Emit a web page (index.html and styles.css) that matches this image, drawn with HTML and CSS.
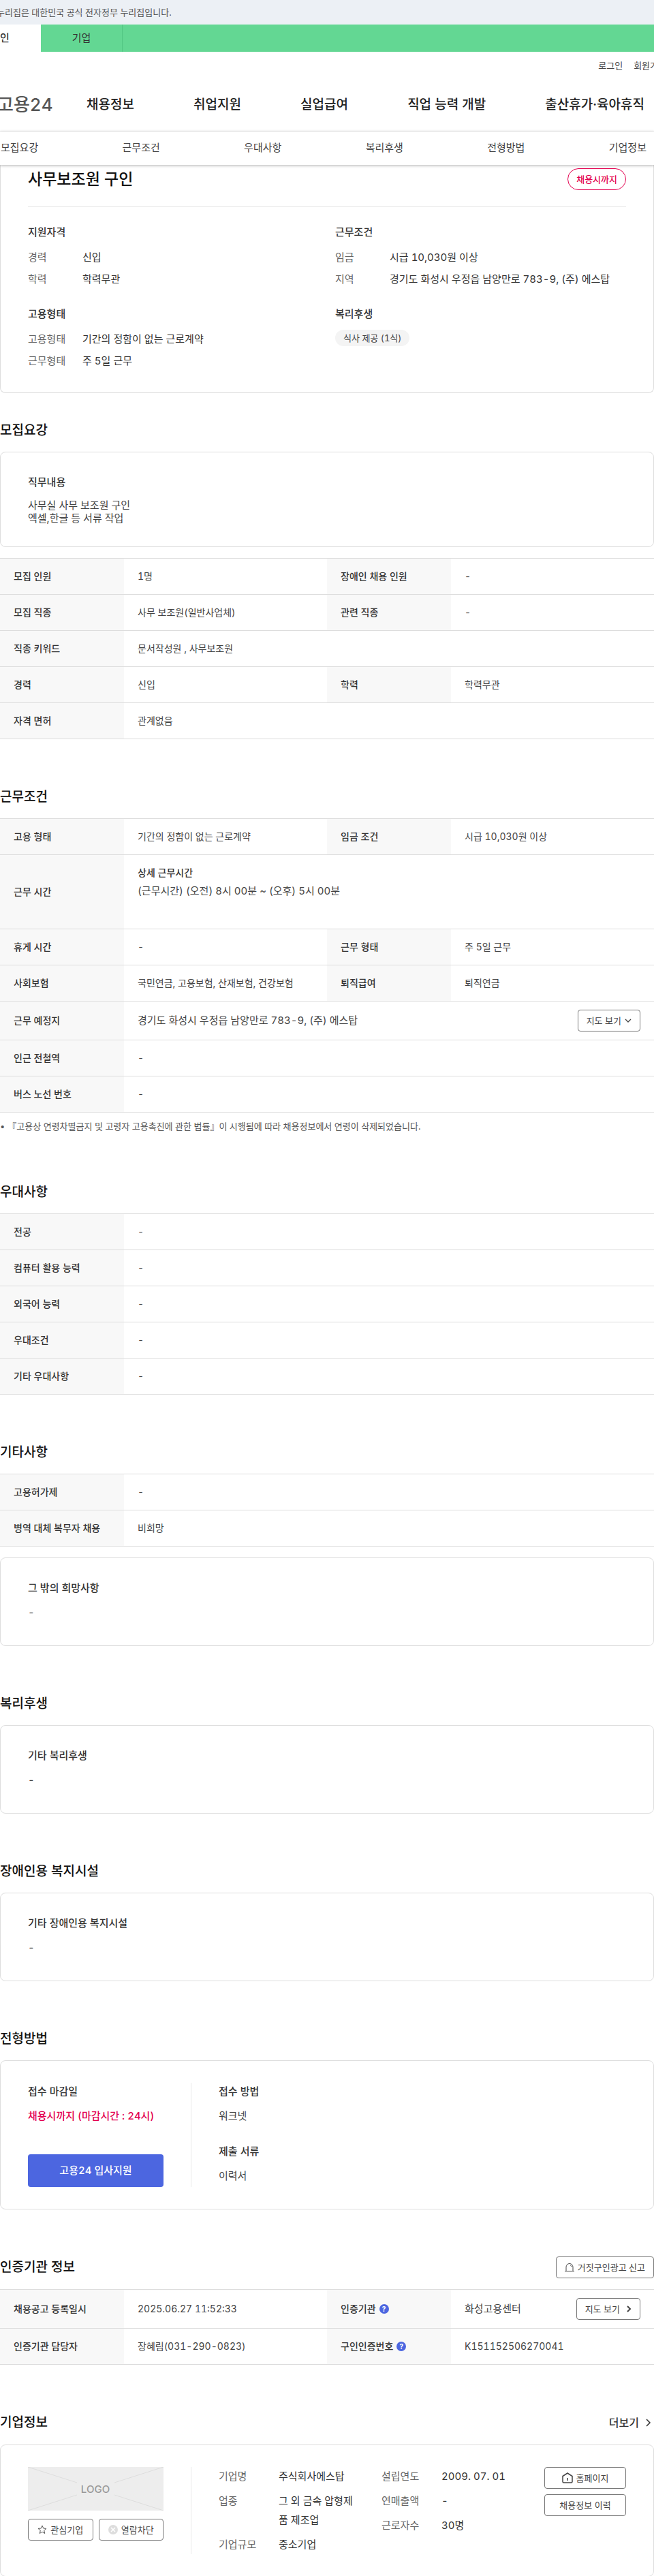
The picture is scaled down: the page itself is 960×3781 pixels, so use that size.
FILE: index.html
```
<!DOCTYPE html>
<html lang="ko">
<head>
<meta charset="utf-8">
<meta name="viewport" content="width=device-width, initial-scale=1">
<title>사무보조원 구인 - 고용24</title>
<link rel="stylesheet" href="styles.css">
</head>
<body>
<div class="gov-bar"><p class="gov-text">누리집은 대한민국 공식 전자정부 누리집입니다.</p></div>
<nav class="site-tabs" aria-label="사이트 구분">
  <a class="site-tab is-active" href="#">개인</a>
  <a class="site-tab" href="#">기업</a>
</nav>
<header class="header">
  <div class="util"><a href="#">로그인</a><a href="#">회원가입</a></div>
  <div class="gnb">
    <a class="brand" href="#">고용24</a>
    <nav class="gnb-menu" aria-label="주 메뉴">
      <a href="#">채용정보</a><a href="#">취업지원</a><a href="#">실업급여</a><a href="#">직업 능력 개발</a><a href="#">출산휴가·육아휴직</a>
    </nav>
  </div>
</header>
<nav class="section-nav" aria-label="본문 바로가기">
  <a href="#recruit">모집요강</a><a href="#work">근무조건</a><a href="#prefer">우대사항</a><a href="#welfare">복리후생</a><a href="#method">전형방법</a><a href="#company">기업정보</a>
</nav>
<main>
  <article class="card summary">
    <div class="summary-head">
      <h1>사무보조원 구인</h1>
      <span class="deadline">채용시까지</span>
    </div>
    <div class="summary-grid">
      <section>
        <h3>지원자격</h3>
        <dl class="pairs"><dt>경력</dt><dd>신입</dd><dt>학력</dt><dd>학력무관</dd></dl>
      </section>
      <section>
        <h3>근무조건</h3>
        <dl class="pairs"><dt>임금</dt><dd>시급 10,030원 이상</dd><dt>지역</dt><dd>경기도 화성시 우정읍 남양만로 783-9, (주) 에스탑</dd></dl>
      </section>
      <section>
        <h3>고용형태</h3>
        <dl class="pairs"><dt>고용형태</dt><dd>기간의 정함이 없는 근로계약</dd><dt>근무형태</dt><dd>주 5일 근무</dd></dl>
      </section>
      <section>
        <h3>복리후생</h3>
        <span class="chip">식사 제공 (1식)</span>
      </section>
    </div>
  </article>

  <section class="block" id="recruit">
    <h2>모집요강</h2>
    <div class="card note-card">
      <h3>직무내용</h3>
      <p class="duty">사무실 사무 보조원 구인<br>엑셀,한글 등 서류 작업</p>
    </div>
    <table class="info after-card">
      <colgroup><col class="c-th"><col class="c-td"><col class="c-th"><col class="c-td"></colgroup>
      <tr><th scope="row">모집 인원</th><td>1명</td><th scope="row">장애인 채용 인원</th><td>-</td></tr>
      <tr><th scope="row">모집 직종</th><td>사무 보조원(일반사업체)</td><th scope="row">관련 직종</th><td>-</td></tr>
      <tr><th scope="row">직종 키워드</th><td colspan="3">문서작성원 , 사무보조원</td></tr>
      <tr><th scope="row">경력</th><td>신입</td><th scope="row">학력</th><td>학력무관</td></tr>
      <tr><th scope="row">자격 면허</th><td colspan="3">관계없음</td></tr>
    </table>
  </section>

  <section class="block" id="work">
    <h2>근무조건</h2>
    <table class="info">
      <colgroup><col class="c-th"><col class="c-td"><col class="c-th"><col class="c-td"></colgroup>
      <tr><th scope="row">고용 형태</th><td>기간의 정함이 없는 근로계약</td><th scope="row">임금 조건</th><td>시급 10,030원 이상</td></tr>
      <tr class="hours"><th scope="row">근무 시간</th><td colspan="3"><strong>상세 근무시간</strong><p>(근무시간) (오전) 8시 00분 ~ (오후) 5시 00분</p></td></tr>
      <tr><th scope="row">휴게 시간</th><td>-</td><th scope="row">근무 형태</th><td>주 5일 근무</td></tr>
      <tr><th scope="row">사회보험</th><td>국민연금, 고용보험, 산재보험, 건강보험</td><th scope="row">퇴직급여</th><td>퇴직연금</td></tr>
      <tr class="tall"><th scope="row">근무 예정지</th><td colspan="3"><div class="with-btn"><span>경기도 화성시 우정읍 남양만로 783-9, (주) 에스탑</span><button class="btn" type="button">지도 보기<svg width="10" height="8" viewBox="0 0 10 8" fill="none" stroke="currentColor" stroke-width="1.300"><path d="M1 2l4 4 4-4"/></svg></button></div></td></tr>
      <tr><th scope="row">인근 전철역</th><td colspan="3">-</td></tr>
      <tr><th scope="row">버스 노선 번호</th><td colspan="3">-</td></tr>
    </table>
    <p class="footnote">『고용상 연령차별금지 및 고령자 고용촉진에 관한 법률』이 시행됨에 따라 채용정보에서 연령이 삭제되었습니다.</p>
  </section>

  <section class="block" id="prefer">
    <h2>우대사항</h2>
    <table class="info">
      <colgroup><col class="c-th"><col></colgroup>
      <tr><th scope="row">전공</th><td>-</td></tr>
      <tr><th scope="row">컴퓨터 활용 능력</th><td>-</td></tr>
      <tr><th scope="row">외국어 능력</th><td>-</td></tr>
      <tr><th scope="row">우대조건</th><td>-</td></tr>
      <tr><th scope="row">기타 우대사항</th><td>-</td></tr>
    </table>
  </section>

  <section class="block" id="etc">
    <h2>기타사항</h2>
    <table class="info">
      <colgroup><col class="c-th"><col></colgroup>
      <tr><th scope="row">고용허가제</th><td>-</td></tr>
      <tr><th scope="row">병역 대체 복무자 채용</th><td>비희망</td></tr>
    </table>
    <div class="card note-card after-table"><h3>그 밖의 희망사항</h3><p>-</p></div>
  </section>

  <section class="block" id="welfare">
    <h2>복리후생</h2>
    <div class="card note-card"><h3>기타 복리후생</h3><p>-</p></div>
  </section>

  <section class="block" id="access">
    <h2>장애인용 복지시설</h2>
    <div class="card note-card"><h3>기타 장애인용 복지시설</h3><p>-</p></div>
  </section>

  <section class="block" id="method">
    <h2>전형방법</h2>
    <div class="card split">
      <div class="split-side apply">
        <div><h3>접수 마감일</h3><p class="due">채용시까지 (마감시간 : 24시)</p></div>
        <button class="btn-primary" type="button">고용24 입사지원</button>
      </div>
      <div class="split-main method-list">
        <div><h3>접수 방법</h3><p>워크넷</p></div>
        <div><h3>제출 서류</h3><p>이력서</p></div>
      </div>
    </div>
  </section>

  <section class="block" id="agency">
    <div class="block-head">
      <h2>인증기관 정보</h2>
      <button class="btn" type="button"><svg width="14" height="14" viewBox="0 0 14 14" fill="none" stroke="currentColor"><path d="M2 12.500V6.500a5 5 0 0 1 10 0v6M0 12.500h14M8 4c1.200.2 1.700 1 1.700 2"/></svg>거짓구인광고 신고</button>
    </div>
    <table class="info">
      <colgroup><col class="c-th"><col class="c-td"><col class="c-th"><col class="c-td"></colgroup>
      <tr class="tall"><th scope="row">채용공고 등록일시</th><td>2025.06.27 11:52:33</td><th scope="row"><span class="th-help">인증기관<button class="help" type="button" aria-label="인증기관 도움말">?</button></span></th><td><div class="with-btn"><span>화성고용센터</span><button class="btn" type="button">지도 보기<svg class="go" width="8" height="10" viewBox="0 0 8 10" fill="none" stroke="currentColor" stroke-width="2"><path d="M2 1l4 4-4 4"/></svg></button></div></td></tr>
      <tr><th scope="row">인증기관 담당자</th><td>장혜림(031-290-0823)</td><th scope="row"><span class="th-help">구인인증번호<button class="help" type="button" aria-label="구인인증번호 도움말">?</button></span></th><td>K151152506270041</td></tr>
    </table>
  </section>

  <section class="block" id="company">
    <div class="block-head">
      <h2>기업정보</h2>
      <a class="more" href="#">더보기<svg width="8" height="12" viewBox="0 0 8 12" fill="none" stroke="currentColor" stroke-width="1.500"><path d="M1 1l5 5-5 5"/></svg></a>
    </div>
    <div class="card split company">
      <div class="split-side">
        <svg class="logo-box" viewBox="0 0 199 64" preserveAspectRatio="none" role="img" aria-label="LOGO">
          <rect width="199" height="64" fill="#ededed"/>
          <path d="M0 0L72 23M199 0L127 23M0 64L72 41M199 64L127 41" stroke="#ddd" fill="none"/>
          <text x="99" y="38" text-anchor="middle">LOGO</text>
        </svg>
        <div class="side-btns">
          <button class="btn" type="button"><svg width="14" height="14" viewBox="0 0 14 14" fill="none" stroke="#555"><path d="M7 1l1.700 4 4.300.4-3.300 2.800 1 4.300L7 10.200l-3.700 2.300 1-4.300L1 5.400 5.300 5z"/></svg>관심기업</button>
          <button class="btn" type="button"><svg width="14" height="14" viewBox="0 0 14 14" fill="none"><circle cx="7" cy="7" r="7" fill="#ddd"/><path d="M4 4l6 6m0-6l-6 6" stroke="#fff" stroke-width="1.500"/></svg>열람차단</button>
        </div>
      </div>
      <div class="split-main company-main">
        <dl class="pairs"><dt>기업명</dt><dd>주식회사에스탑</dd><dt>업종</dt><dd>그 외 금속 압형제품 제조업</dd><dt>기업규모</dt><dd>중소기업</dd></dl>
        <dl class="pairs"><dt>설립연도</dt><dd>2009. 07. 01</dd><dt>연매출액</dt><dd>-</dd><dt>근로자수</dt><dd>30명</dd></dl>
        <div class="company-btns">
          <button class="btn" type="button"><svg width="16" height="16" viewBox="0 0 16 16" fill="none" stroke="currentColor" stroke-width="1.500"><path d="M1 5.500L8 1l7 4.500V13.500a1.500 1.500 0 0 1-1.500 1.500h-11A1.500 1.500 0 0 1 1 13.500zM8 8v4"/></svg>홈페이지</button>
          <button class="btn" type="button">채용정보 이력</button>
        </div>
      </div>
    </div>
  </section>
</main>
</body>
</html>
```
FILE: styles.css
```
* { box-sizing: border-box; }
body, h1, h2, h3, p, dl, dd { margin: 0; }
body {
  background: #fff;
  color: #444;
  font-family: Inter, "Noto Sans CJK KR", sans-serif;
  font-size: 15px;
  font-variant-numeric: tabular-nums;
  line-height: 24px;
  word-break: break-all;
  overflow-x: hidden;
}
a { color: inherit; text-decoration: none; }
button { font: inherit; font-variant-numeric: inherit; color: inherit; cursor: pointer; }

.gov-bar { height: 36px; background: #ecf0f5; overflow: hidden; }
.gov-text { margin-left: -5px; font-size: 13px; line-height: 36px; color: #555; }

.site-tabs { display: flex; height: 40px; background: #63d793; }
.site-tab { width: 120px; line-height: 40px; text-align: center; color: #333; border-right: 1px solid #52c583; }
.site-tab.is-active { margin-left: -60px; background: #fff; border: 0; font-weight: 500; }

.header { height: 117px; border-bottom: 1px solid #e8e8e8; }
.util { display: flex; justify-content: flex-end; gap: 16px; margin-right: -18px; padding-top: 8px; font-size: 13px; white-space: nowrap; }
.gnb { display: flex; align-items: center; padding: 28px 14px 0 0; line-height: 36px; white-space: nowrap; }
.brand { flex: none; width: 131px; margin-left: -4px; font-size: 26px; font-weight: 500; color: #555; }
.gnb-menu { flex: 1; display: flex; justify-content: space-between; font-size: 19px; font-weight: 500; color: #222; }

.section-nav {
  position: relative;
  display: flex;
  justify-content: space-between;
  height: 49px;
  padding: 0 11px 0 1px;
  line-height: 48px;
  background: #fff;
  box-shadow: 0 1px 4px rgba(0, 0, 0, .3);
}

.card { border: 1px solid #ddd; border-radius: 8px; background: #fff; padding: 32px 40px; }
h2 { font-size: 19px; font-weight: 500; line-height: 32px; color: #111; }
h3 { font-size: 15px; font-weight: 500; line-height: 24px; color: #333; }

.summary { border-top: 0; border-top-left-radius: 0; border-top-right-radius: 0; padding: 0 40px 34px; }
.summary-head { display: flex; justify-content: space-between; align-items: center; padding: 5px 0 24px; border-bottom: 1px solid #e8e8e8; }
h1 { font-size: 23px; font-weight: 500; line-height: 32px; color: #111; }
.deadline { padding: 0 12px; border: 1px solid #e3004f; border-radius: 16px; font-size: 13px; font-weight: 500; line-height: 30px; color: #e3004f; }
.summary-grid { display: grid; grid-template-columns: 451fr 427fr; row-gap: 27px; padding-top: 25px; }
.pairs { display: grid; grid-template-columns: 80px 1fr; row-gap: 8px; }
.pairs dt { color: #666; }
.pairs dd { color: #333; }
.summary .pairs { padding-top: 13px; }
.chip { display: inline-block; margin-top: 11px; padding: 0 12px; border-radius: 12px; background: #f4f4f4; font-size: 13px; }

.block { padding-top: 39px; }
.block h2 { margin-bottom: 15px; }
.note-card { min-height: 130px; }
.note-card p { padding-top: 12px; }
.note-card .duty { line-height: 19px; }
.block + .block { padding-top: 69px; }

.info { width: 100%; table-layout: fixed; border-collapse: collapse; border-top: 1px solid #ddd; font-size: 14px; }
.after-card { margin-top: 16px; }
.after-table { margin-top: 16px; }
.c-th { width: 182px; }
.info th, .info td { height: 53px; padding: 0 20px; border-bottom: 1px solid #ddd; text-align: left; }
.info th { background: #f8f8f8; font-weight: 500; color: #333; }
.info .tall th, .info .tall td { height: 57px; }
.info .hours th, .info .hours td { height: 109px; }
.info .hours td { padding-bottom: 30px; }
.hours strong { display: block; font-weight: 500; color: #333; margin-bottom: 3px; }
.hours p { font-size: 15px; }
.with-btn { display: flex; justify-content: space-between; align-items: center; font-size: 15px; }
.footnote { padding-top: 8px; font-size: 13px; color: #555; }
.footnote::before { content: "•"; margin-right: 4px; }

.btn { display: inline-flex; justify-content: center; align-items: center; gap: 5px; height: 32px; padding: 0 12px; border: 1px solid #777; border-radius: 4px; background: #fff; font-size: 13px; white-space: nowrap; }
.go { margin-left: 4px; }
.btn-primary { width: 100%; height: 48px; border: 0; border-radius: 4px; background: #4c66e0; color: #fff; font-size: 15px; font-weight: 500; }
.th-help { display: inline-flex; align-items: center; gap: 5px; }
.help { width: 14px; height: 14px; padding: 0; border: 0; border-radius: 50%; background: #4c66e0; color: #fff; font-size: 10px; line-height: 14px; font-weight: 700; }

.block-head { display: flex; justify-content: space-between; align-items: center; margin-bottom: 16px; }
.block .block-head h2 { margin: 0; }
.more { display: flex; align-items: center; gap: 10px; padding-right: 4px; font-size: 16px; font-weight: 500; color: #333; }

.split { display: flex; padding: 32px 40px; }
.split-side { flex: none; width: 240px; padding-right: 40px; border-right: 1px solid #e8e8e8; }
.split-main { flex: 1; padding-left: 40px; }
.apply { display: flex; flex-direction: column; justify-content: space-between; }
.due { font-weight: 500; color: #e3004f; }
.split h3, .split p { line-height: 26px; }
.split p { padding-top: 10px; }
.method-list { min-height: 153px; }
.method-list > div + div { padding-top: 26px; }
.logo-box { display: block; width: 100%; height: 64px; }
.logo-box text { font-size: 15px; font-weight: 500; fill: #999; }
.side-btns { display: flex; gap: 8px; padding-top: 12px; }
.side-btns .btn { flex: 1; padding: 0; }
.company-main { display: grid; grid-template-columns: 200px 200px 1fr; column-gap: 39px; }
.company-main .pairs { grid-template-columns: 88px 1fr; row-gap: 8px; line-height: 28px; align-content: start; }
.company-btns { display: grid; gap: 8px; align-content: start; }
.company-btns .btn { padding: 0; }
```
